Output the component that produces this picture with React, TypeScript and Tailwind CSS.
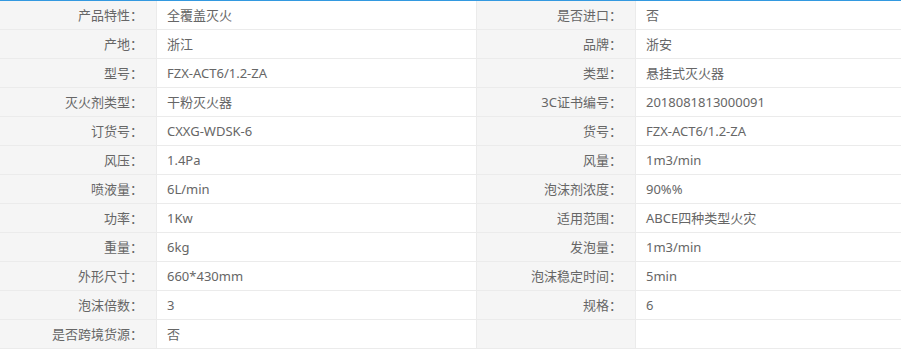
const rows: [string, string, string, string][] = [
  ["产品特性", "全覆盖灭火", "是否进口", "否"],
  ["产地", "浙江", "品牌", "浙安"],
  ["型号", "FZX-ACT6/1.2-ZA", "类型", "悬挂式灭火器"],
  ["灭火剂类型", "干粉灭火器", "3C证书编号", "2018081813000091"],
  ["订货号", "CXXG-WDSK-6", "货号", "FZX-ACT6/1.2-ZA"],
  ["风压", "1.4Pa", "风量", "1m3/min"],
  ["喷液量", "6L/min", "泡沫剂浓度", "90%%"],
  ["功率", "1Kw", "适用范围", "ABCE四种类型火灾"],
  ["重量", "6kg", "发泡量", "1m3/min"],
  ["外形尺寸", "660*430mm", "泡沫稳定时间", "5min"],
  ["泡沫倍数", "3", "规格", "6"],
  ["是否跨境货源", "否", "", ""],
]

function Label({ text }: { text: string }) {
  return (
    <div className="h-[29px] flex items-center justify-end pt-[2px] pr-[13px] bg-[#f5f5f5] border-r border-b border-[#ebebeb]">
      {text ? `${text}：` : ""}
    </div>
  )
}

function Value({ text, last }: { text: string; last?: boolean }) {
  return (
    <div className={`h-[29px] flex items-center pt-[2px] pl-[10px] bg-white border-b border-[#ebebeb] ${last ? "" : "border-r"}`}>
      {text}
    </div>
  )
}

export default function App() {
  return (
    <div
      className="w-[901px] h-[364px] bg-white text-[13px] text-[#666]"
      style={{ fontFamily: '"Noto Sans", "Noto Sans CJK SC", sans-serif' }}
    >
      <div className="border-t border-[#3399e0] grid grid-cols-[157px_320px_159px_1fr]">
        {rows.map((r, i) => (
          <div key={i} className="contents">
            <Label text={r[0]} />
            <Value text={r[1]} />
            <Label text={r[2]} />
            <Value text={r[3]} last />
          </div>
        ))}
      </div>
    </div>
  )
}
